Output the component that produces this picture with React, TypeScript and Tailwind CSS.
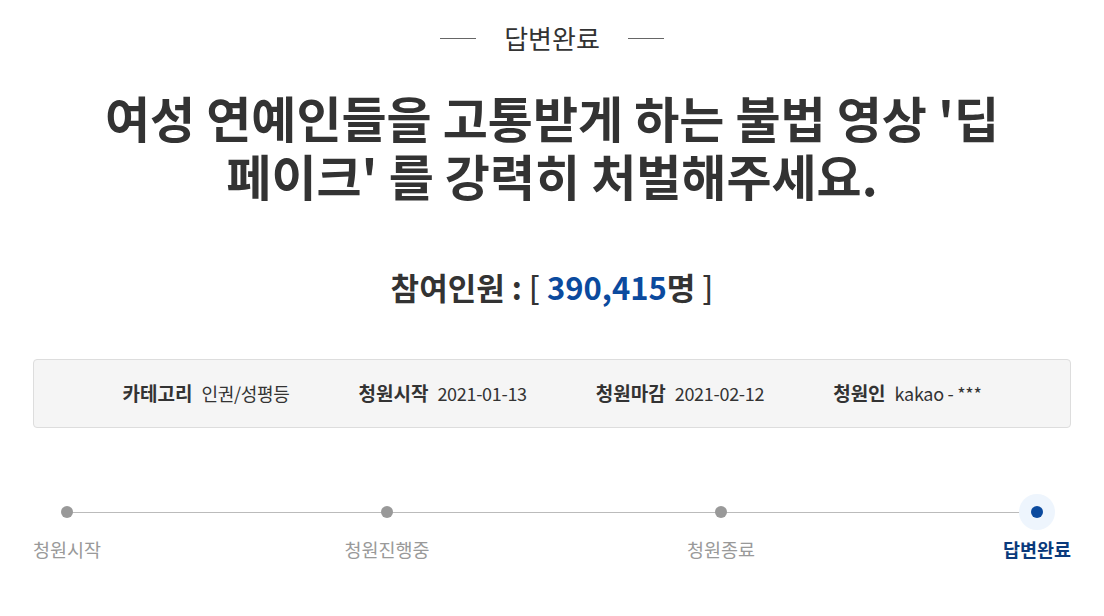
const font = { fontFamily: '"Noto Sans CJK KR", "Noto Sans", sans-serif' }

const info = [
  { label: '카테고리', value: '인권/성평등' },
  { label: '청원시작', value: '2021-01-13' },
  { label: '청원마감', value: '2021-02-12' },
  { label: '청원인', value: 'kakao - ***' },
]

function Step({ label, active, className }: { label: string; active?: boolean; className: string }) {
  return (
    <div className={`relative flex flex-col items-center ${className}`}>
      <div className="flex h-8 w-8 items-center justify-center">
        {active ? (
          <div className="flex h-9 w-9 shrink-0 items-center justify-center rounded-full bg-[#eef5fd]">
            <div className="h-3 w-3 rounded-full bg-[#0b4a9e]" />
          </div>
        ) : (
          <div className="h-3 w-3 rounded-full bg-[#999]" />
        )}
      </div>
      <span
        className={`mt-[9px] whitespace-nowrap text-[18.5px] leading-6 ${
          active ? 'font-bold text-[#0a3a7c]' : 'text-[#999]'
        }`}
      >
        {label}
      </span>
    </div>
  )
}

export default function App() {
  return (
    <div className="w-[1104px] bg-white pt-[22px] text-[#333]" style={font}>
      <div className="flex items-center justify-center gap-[28px]">
        <span className="h-px w-[36px] bg-[#666]" />
        <span className="text-[26px] leading-8 text-[#333]">답변완료</span>
        <span className="h-px w-[36px] bg-[#666]" />
      </div>

      <h1 className="mt-[34px] text-center text-[49px] font-bold leading-[58px] text-[#333]">
        여성 연예인들을 고통받게 하는 불법 영상 '딥
        <br />
        페이크' 를 강력히 처벌해주세요.
      </h1>

      <p className="mt-[63px] text-center text-[31px] font-bold leading-10">
        참여인원 : <span className="font-medium">[</span>{' '}
        <span className="text-[#0b4a9e]">390,415</span>명 <span className="font-medium">]</span>
      </p>

      <div className="mx-[33px] mt-[52px] flex h-[69px] items-center justify-center gap-[69px] rounded border border-[#ddd] bg-[#f5f5f5]">
        {info.map((item) => (
          <div key={item.label} className="flex items-center gap-[9px]">
            <span className="text-[19px] font-bold">{item.label}</span>
            <span className="text-[18px] tracking-[-0.3px]">{item.value}</span>
          </div>
        ))}
      </div>

      <div className="relative mt-[68px] flex pb-[40px]">
        <div className="absolute left-[66px] top-[16px] h-px w-[970px] bg-[#bbb]" />
        <Step label="청원시작" className="ml-[33px] w-[68px]" />
        <Step label="청원진행중" className="ml-[243px] w-[86px]" />
        <Step label="청원종료" className="ml-[257px] w-[68px]" />
        <Step label="답변완료" active className="ml-[248px] w-[68px]" />
      </div>
    </div>
  )
}
